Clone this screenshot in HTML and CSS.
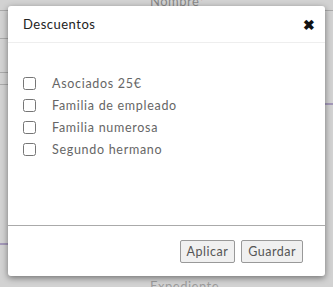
FILE: index.html
```html
<!DOCTYPE html>
<html>
<head>
  <meta charset="utf-8">
  <title>Descuentos</title>
  <link rel="stylesheet" href="styles.css">
</head>
<body>
  <div class="page">
    <div class="label top">Nombre<span class="req">*</span></div>
    <div class="rule r1"></div>
    <div class="rule r2"></div>
    <div class="rule r3 purple"></div>
    <div class="rule r4 purple"></div>
    <div class="label bottom">Expediente</div>
  </div>
  <div class="backdrop"></div>

  <div class="modal">
    <div class="modal-head">
      <span class="title">Descuentos</span>
      <span class="close">&#10006;</span>
    </div>
    <div class="modal-body">
      <label class="opt"><input type="checkbox"> <span>Asociados 25€</span></label>
      <label class="opt"><input type="checkbox"> <span>Familia de empleado</span></label>
      <label class="opt"><input type="checkbox"> <span>Familia numerosa</span></label>
      <label class="opt"><input type="checkbox"> <span>Segundo hermano</span></label>
    </div>
    <div class="modal-foot">
      <button>Aplicar</button>
      <button>Guardar</button>
    </div>
  </div>
</body>
</html>
```

FILE: styles.css
```css
body { margin: 0; width: 333px; height: 287px; overflow: hidden; background: #fff; font-family: "Lato", "Open Sans", sans-serif; color: #555; position: relative; }
.page { position: absolute; inset: 0; }
.label { position: absolute; font-size: 13px; color: #444; letter-spacing: 0.5px; }
.label.top { left: 150px; top: -7px; }
.label.bottom { left: 150px; top: 278px; color: #777; }
.req { color: #d33; }
.rule { position: absolute; height: 1px; background: #999; }
.r1 { left: 0; right: 0; top: 10px; }
.r2 { left: 0; width: 10px; top: 38px; box-shadow: 0 34px 0 #999, 0 46px 0 #999; }
.r3 { right: 0; width: 10px; top: 103px; }
.r4 { left: 0; width: 10px; top: 243px; }
.purple { background: #8a6fbf; height: 2px; }
.backdrop { position: absolute; inset: 0; background: rgba(180,180,180,0.6); }

.modal { position: absolute; left: 8px; top: 6px; width: 317px; height: 270px; background: #fff; border-radius: 3px; box-shadow: 0 2px 6px rgba(0,0,0,0.45); display: flex; flex-direction: column; }
.modal-head { height: 36px; display: flex; align-items: center; justify-content: space-between; padding: 0 10px 0 15px; border-bottom: 1px solid #eee; }
.title { font-size: 13px; color: #222; letter-spacing: 0.5px; }
.close { font-size: 14px; color: #111; font-weight: bold; }
.modal-body { flex: 1; padding: 34px 15px 0; display: flex; flex-direction: column; gap: 9px; border-bottom: 1px solid #aaa; }
.opt { display: flex; align-items: center; font-size: 12.5px; color: #666; letter-spacing: 0.7px; height: 13px; }
.opt input { margin: 0 16px 0 0; width: 13px; height: 13px; }
.modal-foot { height: 50px; display: flex; justify-content: flex-end; align-items: center; gap: 6px; padding: 0 22px 0 0; }
.modal-foot button { font-family: "Lato", sans-serif; font-size: 12.5px; letter-spacing: 0.5px; color: #555; background: #f0f0f0; border: 1px solid #999; border-radius: 2px; height: 23px; padding: 0 6px; }
```
